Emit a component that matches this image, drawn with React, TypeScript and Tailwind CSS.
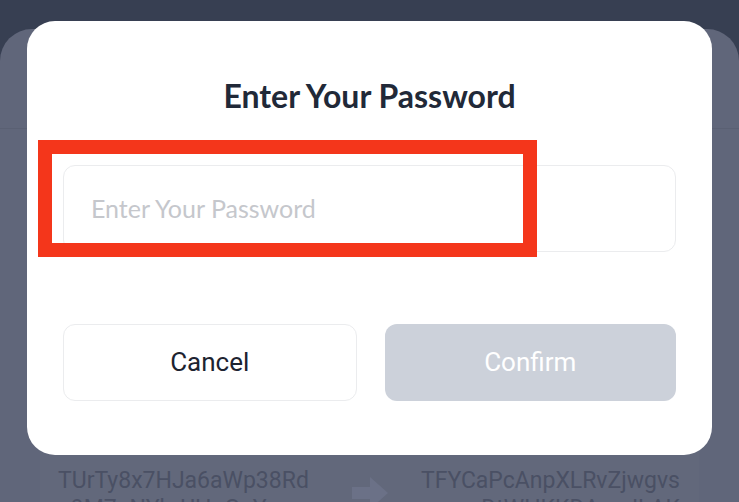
export default function App() {
  return (
    <div className="relative w-[739px] h-[502px] overflow-hidden bg-[#373f52]">
      {/* page underneath the overlay */}
      <div className="mt-[29px] h-[520px] rounded-t-[32px] bg-[#60667a] flex flex-col">
        <div className="h-[100px] border-b border-[#5a6073]" />
        <div className="flex-1" />
        <div className="mx-[40px] mb-[20px] h-[80px] bg-[#62687b] flex items-start pt-[18px] font-['Roboto',sans-serif] text-[23px] leading-[28px] text-[#4a5064]">
          <div className="w-[300px] pl-[18px] whitespace-nowrap">
            <div>TUrTy8x7HJa6aWp38Rd</div>
            <div>n9M7gNYbrUHgGuY</div>
          </div>
          <div className="flex-1 flex justify-center pt-[8px]">
            <svg width="42" height="36" viewBox="0 0 40 36">
              <path d="M2 12h18V2l18 16-18 16V24H2z" fill="#6b7187" />
            </svg>
          </div>
          <div className="w-[300px] pr-[19px] text-right whitespace-nowrap">
            <div>TFYCaPcAnpXLRvZjwgvs</div>
            <div>DtWHKKDAgqJLAK</div>
          </div>
        </div>
      </div>

      {/* modal */}
      <div className="absolute left-[27px] top-[21px] w-[685px] h-[434px] rounded-[28px] bg-white flex flex-col px-[36px]">
        <h1 className="mt-[56px] text-center font-['Lato',sans-serif] font-bold text-[32px] leading-[38px] text-[#212938]">
          Enter Your Password
        </h1>
        <div className="mt-[50px] h-[87px] rounded-[12px] border border-[#ebecee] flex items-center px-[27px]">
          <span className="font-['Lato',sans-serif] text-[25px] text-[#c5c7cc]">Enter Your Password</span>
        </div>
        <div className="mt-[72px] flex gap-[28px] font-['Roboto',sans-serif] text-[26px]">
          <button className="flex-1 h-[77px] rounded-[12px] border border-[#ebecee] bg-white text-[#1d2330]">
            Cancel
          </button>
          <button className="flex-1 h-[77px] rounded-[12px] bg-[#ccd1da] text-white">
            Confirm
          </button>
        </div>
      </div>

      {/* annotation */}
      <div className="absolute left-[38px] top-[140px] w-[499px] h-[117px] border-[14px] border-[#f4361b]" />
    </div>
  );
}
